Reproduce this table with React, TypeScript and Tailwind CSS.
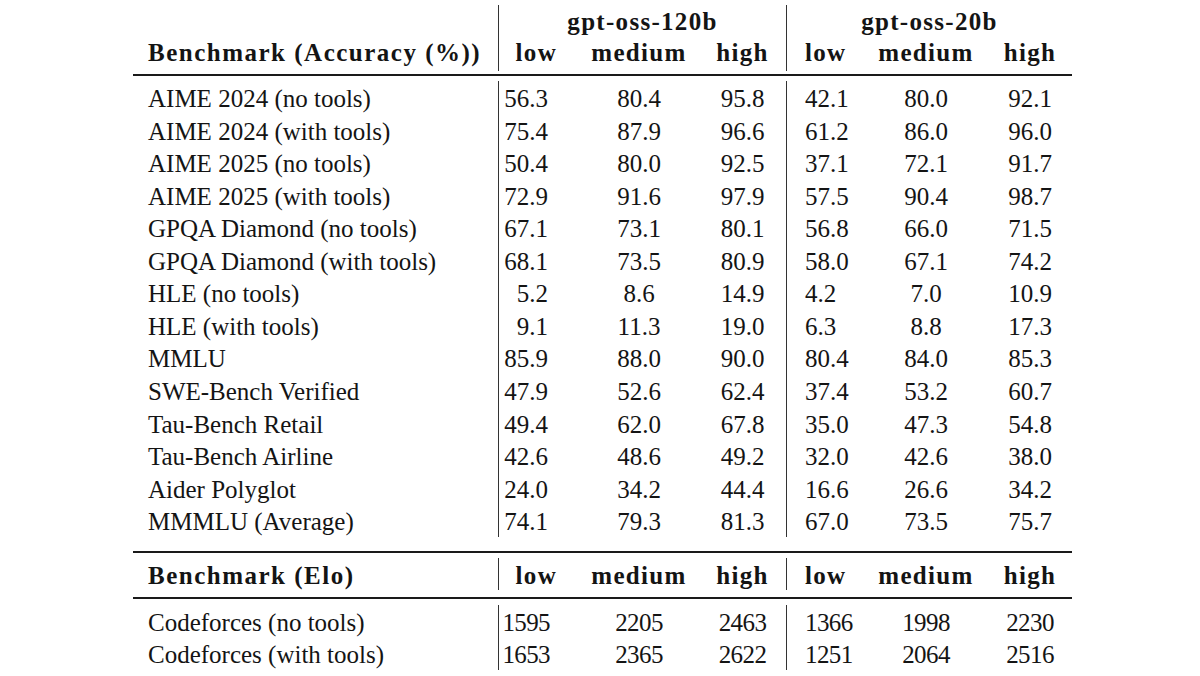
import React from "react";

type Row = { label: string; a: string[]; b: string[] };

const acc: Row[] = [
  { label: "AIME 2024 (no tools)", a: ["56.3", "80.4", "95.8"], b: ["42.1", "80.0", "92.1"] },
  { label: "AIME 2024 (with tools)", a: ["75.4", "87.9", "96.6"], b: ["61.2", "86.0", "96.0"] },
  { label: "AIME 2025 (no tools)", a: ["50.4", "80.0", "92.5"], b: ["37.1", "72.1", "91.7"] },
  { label: "AIME 2025 (with tools)", a: ["72.9", "91.6", "97.9"], b: ["57.5", "90.4", "98.7"] },
  { label: "GPQA Diamond (no tools)", a: ["67.1", "73.1", "80.1"], b: ["56.8", "66.0", "71.5"] },
  { label: "GPQA Diamond (with tools)", a: ["68.1", "73.5", "80.9"], b: ["58.0", "67.1", "74.2"] },
  { label: "HLE (no tools)", a: ["5.2", "8.6", "14.9"], b: ["4.2", "7.0", "10.9"] },
  { label: "HLE (with tools)", a: ["9.1", "11.3", "19.0"], b: ["6.3", "8.8", "17.3"] },
  { label: "MMLU", a: ["85.9", "88.0", "90.0"], b: ["80.4", "84.0", "85.3"] },
  { label: "SWE-Bench Verified", a: ["47.9", "52.6", "62.4"], b: ["37.4", "53.2", "60.7"] },
  { label: "Tau-Bench Retail", a: ["49.4", "62.0", "67.8"], b: ["35.0", "47.3", "54.8"] },
  { label: "Tau-Bench Airline", a: ["42.6", "48.6", "49.2"], b: ["32.0", "42.6", "38.0"] },
  { label: "Aider Polyglot", a: ["24.0", "34.2", "44.4"], b: ["16.6", "26.6", "34.2"] },
  { label: "MMMLU (Average)", a: ["74.1", "79.3", "81.3"], b: ["67.0", "73.5", "75.7"] },
];

const elo: Row[] = [
  { label: "Codeforces (no tools)", a: ["1595", "2205", "2463"], b: ["1366", "1998", "2230"] },
  { label: "Codeforces (with tools)", a: ["1653", "2365", "2622"], b: ["1251", "2064", "2516"] },
];

function Cells({ v, second, bold, compact }: { v: string[]; second?: boolean; bold?: boolean; compact?: boolean }) {
  const b = bold ? "font-bold tracking-[1.3px]" : compact ? "tracking-[-0.6px]" : "";
  return (
    <>
      {second ? (
        <div className={`w-[80px] pl-[18px] text-left ${b}`}>{v[0]}</div>
      ) : (
        <div className={`w-[80px] ${bold ? "pr-[22px]" : compact ? "pr-[29px]" : "pr-[31px]"} text-right ${b}`}>{v[0]}</div>
      )}
      <div className={`${second ? "w-[118px]" : "w-[120px]"} text-center ${b}`}>{v[1]}</div>
      <div className={`w-[87px] text-center ${second ? "pl-[3px]" : ""} ${b}`}>{v[2]}</div>
    </>
  );
}

function DataRow({ label, a, b, bold, lead, compact }: Row & { bold?: boolean; lead?: string; compact?: boolean }) {
  return (
    <div className={`flex h-[32.55px] ${lead ?? "leading-[36.5px]"} whitespace-nowrap`}>
      <div className={`w-[365px] pl-[15px] ${bold ? "font-bold tracking-[1.5px]" : ""}`}>{label}</div>
      <div className="flex w-[288px] border-l border-[#333]">
        <Cells v={a} bold={bold} compact={compact} />
      </div>
      <div className="flex w-[286px] border-l border-[#333]">
        <Cells v={b} second bold={bold} compact={compact} />
      </div>
    </div>
  );
}

const levels = ["low", "medium", "high"];

export default function App() {
  return (
    <div className="w-[1200px] h-[676px] bg-white text-[#141414] font-['Liberation_Serif',serif] text-[25px] overflow-hidden">
      <div className="ml-[133px] w-[939px] pt-[5px]">
        {/* Section A: header */}
        <div>
          <div className="flex h-[33px] leading-[33px] whitespace-nowrap">
            <div className="w-[365px]" />
            <div className="w-[288px] border-l border-[#333] text-center font-bold tracking-[1.3px]">gpt-oss-120b</div>
            <div className="w-[286px] border-l border-[#333] text-center font-bold tracking-[1.3px]">gpt-oss-20b</div>
          </div>
          <DataRow label="Benchmark (Accuracy (%))" a={levels} b={levels} bold lead="leading-[29px]" />
        </div>
        <div className="mt-[3.5px] h-[2px] bg-[#1a1a1a]" />
        {/* Section B: accuracy */}
        <div className="mt-[5px]">
          {acc.map((r) => (
            <DataRow key={r.label} {...r} />
          ))}
        </div>
        <div className="mt-[14px] h-[2px] bg-[#1a1a1a]" />
        {/* Section C: elo header */}
        <div className="mt-[5px]">
          <DataRow label="Benchmark (Elo)" a={levels} b={levels} bold />
        </div>
        <div className="mt-[6.5px] h-[2px] bg-[#1a1a1a]" />
        {/* Section D: elo data */}
        <div className="mt-[6px]">
          {elo.map((r) => (
            <DataRow key={r.label} {...r} compact />
          ))}
        </div>
      </div>
    </div>
  );
}
